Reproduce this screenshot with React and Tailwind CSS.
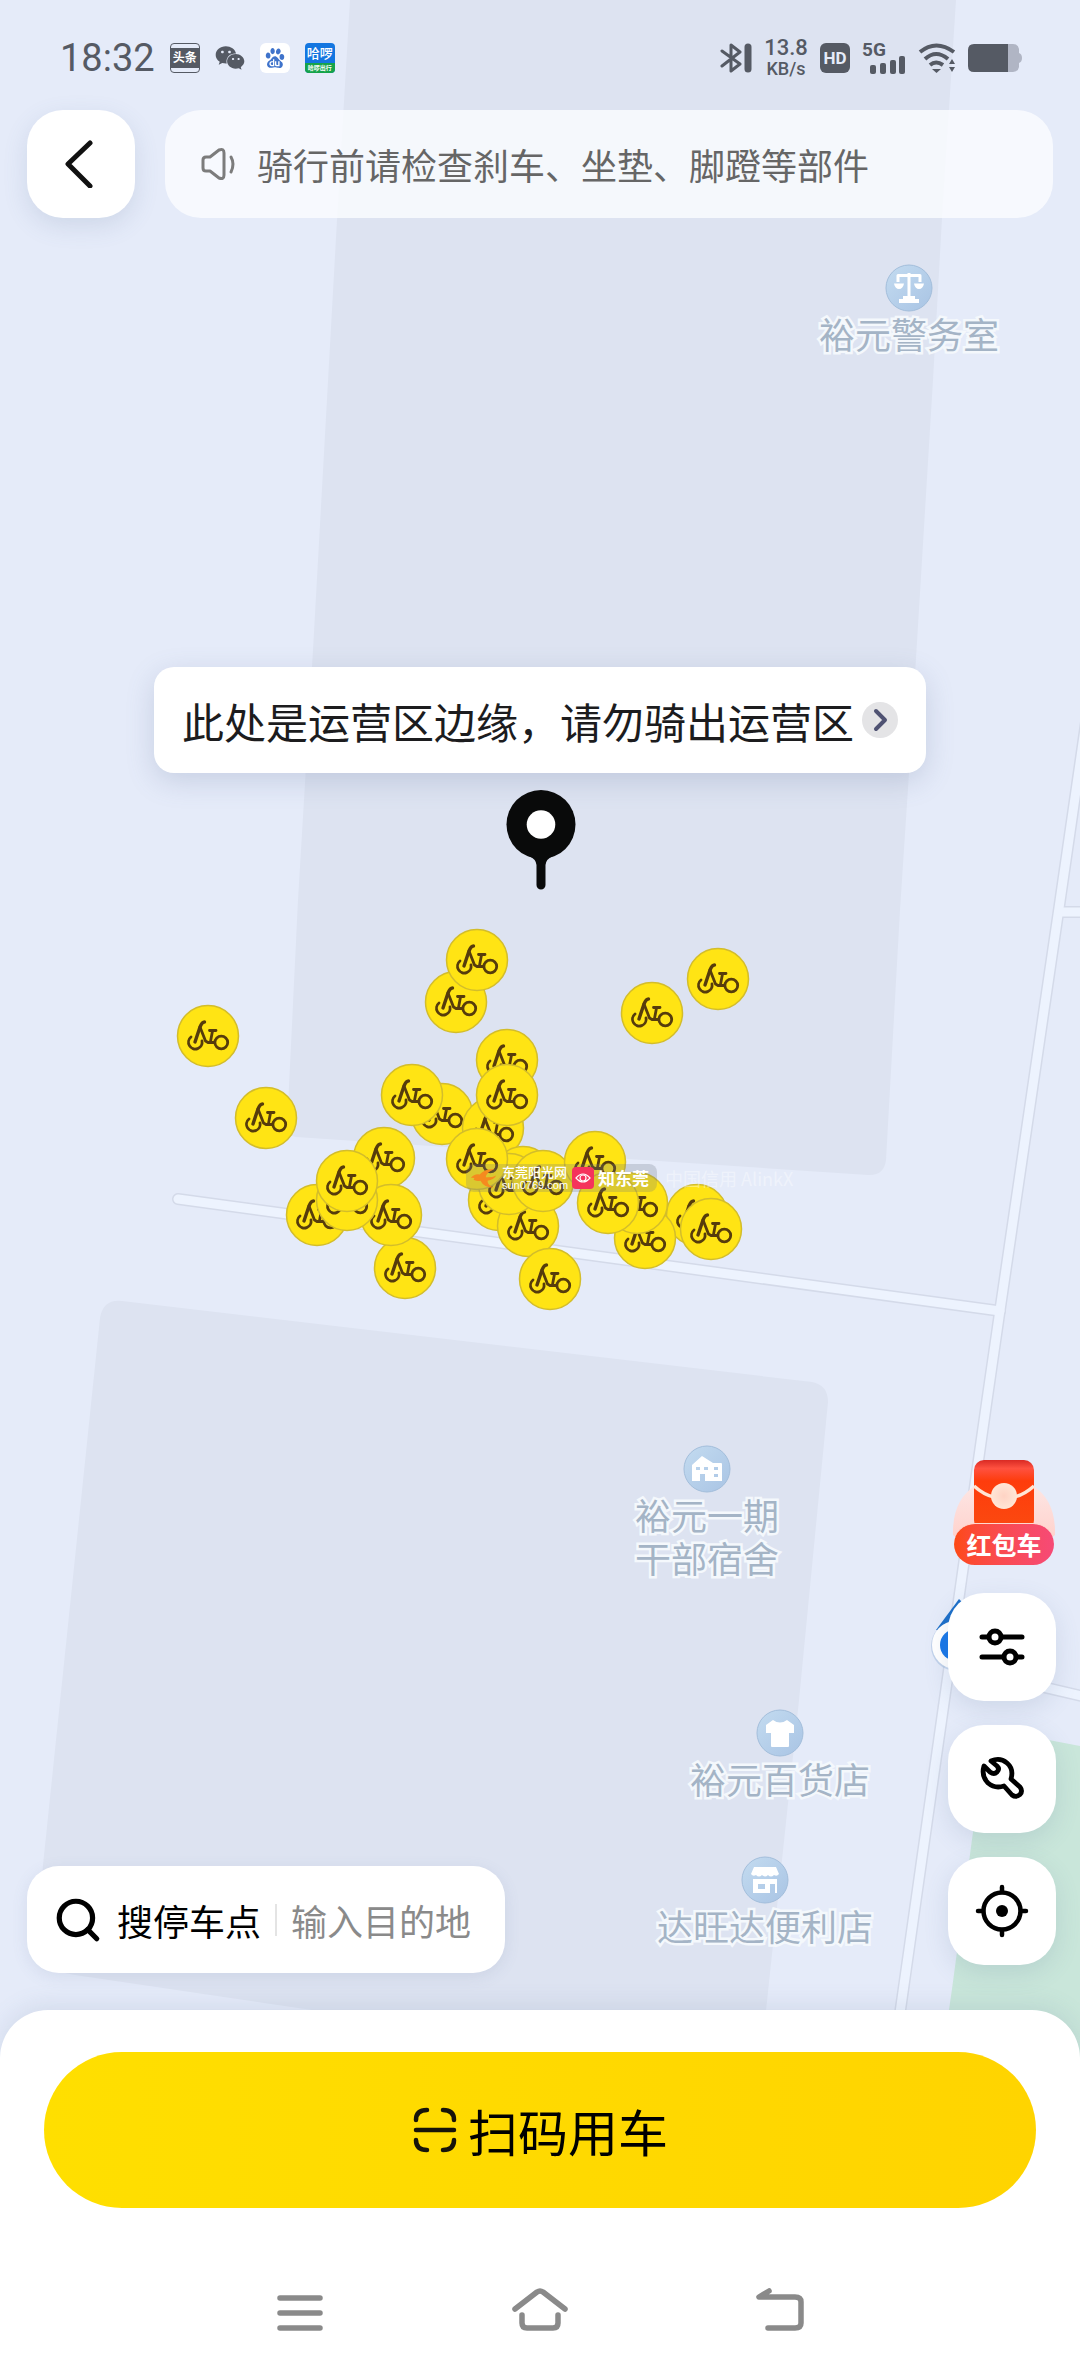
import { Search } from "lucide-react";
import { FaWeixin } from "react-icons/fa";
import { SiBaidu } from "react-icons/si";

// Bike positions on the map, back to front
const bikes = [
  [208, 1036],
  [266, 1118],
  [456, 1002],
  [477, 960],
  [652, 1013],
  [718, 979],
  [442, 1114],
  [412, 1095],
  [384, 1158],
  [317, 1215],
  [405, 1268],
  [391, 1215],
  [347, 1200],
  [347, 1181],
  [507, 1060],
  [493, 1128],
  [507, 1095],
  [523, 1177],
  [499, 1200],
  [528, 1226],
  [509, 1184],
  [477, 1159],
  [543, 1181],
  [550, 1279],
  [595, 1162],
  [697, 1215],
  [645, 1238],
  [637, 1203],
  [608, 1203],
  [711, 1229],
];

const roads = [
  "M178 1199L1000 1311",
  "M1059 912H1090",
  "M1000 1677L1090 1698",
  "M1087 715L1059 908L1000 1310L987 1400L899 2020",
];

const places = [
  { lines: ["裕元警务室"], x: 909, y: 264, icon: "scales" },
  { lines: ["裕元一期", "干部宿舍"], x: 707, y: 1445, icon: "house" },
  { lines: ["裕元百货店"], x: 780, y: 1709, icon: "shirt" },
  { lines: ["达旺达便利店"], x: 765, y: 1856, icon: "store" },
];

const PlaceIcon = ({ name }) => (
  <svg
    className="size-12"
    viewBox="0 0 48 48"
    fill="#fff"
    stroke="none"
    aria-hidden="true"
  >
    <defs>
      <linearGradient id={`place-${name}`} x1="0" y1="0" x2="1" y2="1">
        <stop offset="0" stopColor="#c3dbf0" />
        <stop offset="1" stopColor="#a9c4e4" />
      </linearGradient>
    </defs>
    <circle
      cx="24"
      cy="24"
      r="23"
      fill={`url(#place-${name})`}
      stroke="#a3bedb"
      strokeWidth="1"
    />
    {name === "scales" && (
      <>
        <path
          d="M13 18V11.500H35V18M24 9V34"
          fill="none"
          stroke="#fff"
          strokeWidth="3"
          strokeLinejoin="round"
        />
        <path d="M9 19.500H19C18.500 23 16.500 25 14 25S9.500 23 9 19.500ZM29 19.500H39C38.500 23 36.500 25 34 25S29.500 23 29 19.500ZM18 32H30V35H34V39H14V35H18Z" />
      </>
    )}
    {name === "house" && (
      <path
        fillRule="evenodd"
        d="M9 20L19 11L30 18H38Q39 18 39 19V36H22V29H17V36H9ZM13 22V25H17V22ZM21 22V25H25V22ZM31 22V25H35V22ZM31 29V32H35V29Z"
      />
    )}
    {name === "shirt" && (
      <path d="M17 11Q24 16 31 11L38 16V24H33V37Q33 38 32 38H16Q15 38 15 37V24H10V16Z" />
    )}
    {name === "store" && (
      <path
        fillRule="evenodd"
        d="M13 11H35L38 18Q36 21 33 19Q30 22 27 19Q24 22 21 19Q18 22 15 19Q12 21 10 18ZM12 23H36V37H34V28H29V37H12ZM17 28V33H24V28Z"
      />
    )}
  </svg>
);

const MapBackground = () => (
  <svg
    className="absolute inset-0 h-full w-full"
    viewBox="0 0 1080 2376"
    preserveAspectRatio="xMidYMin slice"
    aria-hidden="true"
  >
    <defs>
      <g id="bike">
        <circle r="30.500" fill="#ffe414" stroke="#d3bd2b" strokeWidth="1.500" />
        <g
          fill="none"
          stroke="#563c0c"
          strokeWidth="2.800"
          strokeLinecap="round"
          strokeLinejoin="round"
        >
          <path d="M-17 1A6.800 6.800 0 1 0 -6 5" />
          <path d="M-13 6L-8 -9Q-6 -14 -3.500 -14" strokeWidth="3.400" />
          <path d="M-8 -9L-2.500 5L0 6.500H6M2.500 5.500L4.500 -5M1.500 -5.500H8" />
          <circle cx="13.300" cy="6.500" r="6.400" />
        </g>
      </g>
    </defs>

    {/* Ground and buildings */}
    <rect width="1080" height="2376" fill="#e5ebf9" />
    <path
      d="M350 0L337 220L313 650L298 900L287 1128Q287 1136 296 1137L868 1175Q884 1176 886 1160L900 910L909 773L933 380L942 218L956 0Z"
      fill="#dde3f1"
    />
    <path
      d="M100 1318Q103 1299 122 1301L812 1382Q828 1385 828 1402L799 1700L765 2020H380L75 1975Q34 1969 36 1940L43 1865Z"
      fill="#dde3f1"
    />
    <path d="M985 1728L1080 1746V2100H936L952 1989L973 1832Z" fill="#c9e6da" />

    {/* Roads: border first, then the surface so that crossings stay open */}
    <g fill="none" stroke="#d4dae9" strokeWidth="12" strokeLinecap="round">
      {roads.map((d) => (
        <path key={d} d={d} />
      ))}
    </g>
    <g fill="none" stroke="#edf3fe" strokeWidth="9" strokeLinecap="round">
      {roads.map((d) => (
        <path key={d} d={d} />
      ))}
    </g>

    {/* Current location */}
    <path d="M936 1630L959 1599L990 1630Z" fill="#1c6fc9" />
    <circle cx="956" cy="1646" r="25" fill="#9db9de" opacity="0.5" />
    <circle cx="956" cy="1645" r="24" fill="#fff" />
    <circle cx="956" cy="1645" r="16" fill="#1877e8" />

    {bikes.map(([x, y]) => (
      <use key={`${x}-${y}`} href="#bike" x={x} y={y} />
    ))}
  </svg>
);

const Place = ({ place }) => (
  <div
    className="absolute flex -translate-x-1/2 flex-col items-center"
    style={{ left: place.x, top: place.y }}
  >
    <PlaceIcon name={place.icon} />
    <p className="text-center text-[36px] leading-[43px] whitespace-nowrap text-[#a4b4c6] [-webkit-text-stroke:5px_#f4f8fc] [paint-order:stroke]">
      {place.lines.map((line) => (
        <span key={line} className="block">
          {line}
        </span>
      ))}
    </p>
  </div>
);

const Credits = () => (
  <div className="absolute top-[1164px] left-[466px] flex h-7 items-center gap-2 text-white">
    <div className="flex h-7 items-center gap-1 rounded-lg bg-gray-500/25 px-1">
      <svg className="h-6 w-7" viewBox="0 0 32 24" aria-hidden="true">
        <path
          d="M1 12Q5 7 11 8Q17 1 28 2Q19 5 18 11Q24 12 30 9Q27 14 20 15Q20 20 27 23Q16 23 12 15Q7 16 4 14Q7 11 1 12Z"
          fill="#f58a1f"
        />
      </svg>
      <div className="font-medium">
        <p className="text-[13px] leading-[14px]">东莞阳光网</p>
        <p className="font-['Liberation_Sans',sans-serif] text-[11px] leading-[12px]">
          sun0769.com
        </p>
      </div>
      <svg className="size-[22px]" viewBox="0 0 22 22" aria-hidden="true">
        <rect width="22" height="22" rx="4" fill="#f5335c" />
        <g fill="none" stroke="#fff" strokeWidth="1.200">
          <path d="M4 11Q11 3 18 11Q11 19 4 11Z" />
          <circle cx="11" cy="11" r="3" />
        </g>
      </svg>
      <p className="pr-1 text-[17px] leading-6 font-bold">知东莞</p>
    </div>
    <p className="text-[18px] leading-6 text-white/40">中国信用 AlinkX</p>
  </div>
);

const StatusBar = () => (
  <div className="flex h-20 items-center justify-between pt-9 pr-[58px] pl-[60px] font-['Roboto','Noto_Sans_CJK_SC',sans-serif] text-[#555a64]">
    <div className="flex items-center gap-[15px]">
      <span className="text-[38px] leading-none">18:32</span>
      <span className="flex size-[30px] items-center justify-center rounded-sm border border-current">
        <span className="flex h-5 w-full items-center justify-center bg-[#555a64] text-[12px] leading-none font-bold text-white">
          头条
        </span>
      </span>
      <FaWeixin className="size-[30px]" />
      <span className="flex size-[30px] items-center justify-center rounded-md bg-white">
        <SiBaidu className="size-5 text-[#3f73cb]" />
      </span>
      <span className="flex size-[30px] flex-col overflow-hidden rounded-sm bg-[#1476e0] text-center text-white">
        <span className="h-5 text-[13px] leading-[22px] font-medium">哈啰</span>
        <span className="h-[10px] bg-[#16a34a] text-[6px] leading-[10px] font-bold">
          哈啰出行
        </span>
      </span>
    </div>

    <div className="flex items-center gap-3">
      {/* Bluetooth with device battery */}
      <svg
        className="h-8 w-8"
        viewBox="0 0 32 32"
        fill="none"
        stroke="currentColor"
        strokeWidth="3"
        strokeLinecap="round"
        strokeLinejoin="round"
        aria-hidden="true"
      >
        <path d="M2 9L20 22L11 29V3L20 10L2 24" />
        <path d="M28 5V27" strokeWidth="7" />
      </svg>
      <span className="flex w-11 flex-col items-center">
        <span className="text-[22px] leading-[21px] font-medium">13.8</span>
        <span className="text-[18px] leading-[21px] font-medium">KB/s</span>
      </span>
      <span className="flex size-[30px] items-center justify-center rounded-md bg-[#555a64] text-[17px] leading-none font-bold text-[#e5ebf9]">
        HD
      </span>
      <span className="relative block h-8 w-11">
        <span className="absolute top-0 left-0 text-[19px] leading-4 font-bold">
          5G
        </span>
        <svg
          className="absolute right-0 bottom-0 h-[18px] w-9"
          viewBox="0 0 36 18"
          fill="currentColor"
          aria-hidden="true"
        >
          <rect x="0" y="9" width="6" height="9" rx="2" />
          <rect x="10" y="7" width="6" height="11" rx="2" />
          <rect x="20" y="4" width="6" height="14" rx="2" />
          <rect x="29" y="0" width="6" height="18" rx="2" />
        </svg>
      </span>
      <svg
        className="h-8 w-[38px]"
        viewBox="0 0 38 32"
        fill="none"
        stroke="currentColor"
        strokeWidth="4"
        aria-hidden="true"
      >
        <path d="M2 10Q18 -3 36 10M7 17Q18 7 30 17M12 23Q18 18 25 23" />
        <path d="M14 27H23L18.500 31Z" fill="currentColor" stroke="none" />
        <path d="M31 22L34 17L37 22ZM31 25L34 30L37 25Z" fill="currentColor" stroke="none" />
      </svg>
      <svg className="h-7 w-[54px]" viewBox="0 0 54 28" aria-hidden="true">
        <path
          d="M38 0H45Q50 0 51 5V9Q54 10 54 14T51 19V23Q50 28 45 28H38Z"
          fill="#b0b5c4"
        />
        <path d="M6 0H40V28H6Q0 28 0 22V6Q0 0 6 0Z" fill="currentColor" />
      </svg>
    </div>
  </div>
);

const RedPacket = () => (
  <button
    type="button"
    className="relative mb-1 flex h-[105px] w-[104px] flex-col items-center justify-end"
  >
    <svg
      className="absolute inset-0 h-full w-full"
      viewBox="0 0 104 105"
      aria-hidden="true"
    >
      <defs>
        <linearGradient id="packet-halo" x1="0" y1="0" x2="0" y2="1">
          <stop offset="0" stopColor="#fde6e4" />
          <stop offset="1" stopColor="#ffcfc9" />
        </linearGradient>
        <linearGradient id="packet" x1="0" y1="0" x2="0" y2="1">
          <stop offset="0" stopColor="#d92a24" />
          <stop offset="0.120" stopColor="#ff5140" />
          <stop offset="0.300" stopColor="#fe3c0c" />
          <stop offset="1" stopColor="#fb4a10" />
        </linearGradient>
        <radialGradient id="seal">
          <stop offset="0" stopColor="#ffd3c4" />
          <stop offset="1" stopColor="#ffe6d6" />
        </radialGradient>
      </defs>
      <path
        d="M1 75Q0 40 24 25H80Q104 40 103 75Q90 86 52 86Q14 86 1 75Z"
        fill="url(#packet-halo)"
      />
      <rect x="22" y="0" width="60" height="70" rx="10" fill="url(#packet)" />
      <path
        d="M22 26Q32 35 42 37M62 37Q72 35 82 26"
        fill="none"
        stroke="#ffe6d6"
        strokeWidth="3.500"
      />
      <circle cx="52" cy="36" r="13" fill="url(#seal)" />
    </svg>
    <span className="relative flex h-[42px] w-[100px] items-center justify-center rounded-full border-t border-[#ffd9d0] bg-linear-to-r from-[#fd4912] to-[#f64a76] text-[25px] leading-none font-bold text-white">
      红包车
    </span>
  </button>
);

const RoundButton = ({ label, children }) => (
  <button
    type="button"
    aria-label={label}
    className="flex size-[108px] shrink-0 items-center justify-center rounded-[36px] bg-white text-black shadow-[0_8px_24px_rgba(90,110,150,0.16)]"
  >
    {children}
  </button>
);

const App = () => {
  return (
    <div className="relative flex min-h-screen flex-col overflow-hidden bg-[#e5ebf9] font-['Noto_Sans_CJK_SC',sans-serif]">
      <MapBackground />
      {places.map((place) => (
        <Place key={place.lines[0]} place={place} />
      ))}
      <Credits />

      {/* Operating area hint with the pickup pin below it */}
      <div className="absolute top-[667px] left-1/2 flex -translate-x-1/2 flex-col items-center gap-[17px]">
        <button
          type="button"
          className="flex h-[106px] items-center gap-2 rounded-[20px] bg-white pr-7 pl-7 text-[42px] whitespace-nowrap text-[#1c1c1e] shadow-[0_8px_28px_rgba(90,110,150,0.22)]"
        >
          此处是运营区边缘，请勿骑出运营区
          <svg className="size-9" viewBox="0 0 36 36" fill="none" aria-hidden="true">
            <circle cx="18" cy="18" r="18" fill="#e4e4e6" />
            <path
              d="M14 9L23 18L14 27"
              stroke="#4f5272"
              strokeWidth="4"
              strokeLinecap="round"
              strokeLinejoin="round"
            />
          </svg>
        </button>
        <svg className="h-[100px] w-[72px]" viewBox="0 0 72 100" aria-hidden="true">
          <circle cx="37" cy="34.500" r="34.500" fill="#090a0a" />
          <path
            d="M25 66Q32 69 32.500 75V95A4.500 4.500 0 0 0 41.500 95V75Q42 69 49 66Z"
            fill="#090a0a"
          />
          <circle cx="37" cy="34.500" r="14.300" fill="#fff" />
        </svg>
      </div>

      <header className="relative">
        <StatusBar />
        <div className="flex items-center gap-[30px] px-[27px] pt-[30px]">
          <RoundButton label="返回">
            <svg
              className="size-12"
              viewBox="0 0 48 48"
              fill="none"
              stroke="#111"
              strokeWidth="5"
              strokeLinecap="round"
              strokeLinejoin="round"
              aria-hidden="true"
            >
              <path d="M33 3L11 24L33 46" />
            </svg>
          </RoundButton>
          <div className="flex h-[108px] flex-1 items-center gap-5 rounded-[36px] bg-[#fbfdff]/80 pl-9 text-[#666]">
            <svg
              className="size-9"
              viewBox="0 0 36 36"
              fill="none"
              stroke="#7c7c7c"
              strokeWidth="3"
              strokeLinecap="round"
              strokeLinejoin="round"
              aria-hidden="true"
            >
              <path d="M5 11H9L18 4Q23 2 23 7V29Q23 34 18 32L9 25H5Q2 25 2 22V14Q2 11 5 11Z" />
              <path d="M30 11Q34 18 30 26" />
            </svg>
            <p className="text-[36px] leading-[44px]">
              骑行前请检查刹车、坐垫、脚蹬等部件
            </p>
          </div>
        </div>
      </header>

      {/* Search box and map tools */}
      <div className="relative mt-auto flex items-end justify-between pr-6 pb-[37px] pl-[27px]">
        <div className="flex h-[107px] items-center gap-[14px] rounded-[32px] bg-white pr-8 pl-[26px] text-[36px] shadow-[0_4px_16px_rgba(90,110,150,0.12)]">
          <Search className="size-[50px] text-black" strokeWidth={2.5} />
          <label htmlFor="destination" className="text-black">
            搜停车点
          </label>
          <span className="h-8 w-0.5 bg-[#e4e4e4]" />
          <input
            id="destination"
            type="text"
            placeholder="输入目的地"
            className="w-[182px] bg-transparent placeholder:text-[#8a8a8a] outline-none"
          />
        </div>

        <div className="mb-2 flex flex-col items-end gap-6">
          <RedPacket />
          <RoundButton label="筛选">
            <svg
              className="size-12"
              viewBox="0 0 48 48"
              fill="none"
              stroke="currentColor"
              strokeWidth="5"
              strokeLinecap="round"
              aria-hidden="true"
            >
              <path d="M4 14H10M24 14H44M4 34H25M39 34H44" />
              <circle cx="17" cy="14" r="6" />
              <circle cx="32" cy="34" r="6" />
            </svg>
          </RoundButton>
          <RoundButton label="报修">
            <svg
              className="size-12"
              viewBox="0 0 48 48"
              fill="none"
              stroke="currentColor"
              strokeWidth="4.800"
              strokeLinecap="round"
              strokeLinejoin="round"
              aria-hidden="true"
            >
              <path d="M13 6Q22 2 29 8Q36 14 33 24L42 32Q45 36 42 39.500Q38 43 34 40L26 31Q17 34 10 28Q3 21 6 11L12 17Q16 20 19 17Q22 14 19 11Z" />
            </svg>
          </RoundButton>
          <RoundButton label="定位">
            <svg
              className="size-[54px]"
              viewBox="0 0 54 54"
              fill="none"
              stroke="currentColor"
              strokeWidth="4.500"
              strokeLinecap="round"
              aria-hidden="true"
            >
              <circle cx="27" cy="27" r="18.500" />
              <circle cx="27" cy="27" r="6" fill="currentColor" stroke="none" />
              <path d="M27 3V8M27 46V51M3 27H8M46 27H51" />
            </svg>
          </RoundButton>
        </div>
      </div>

      {/* Bottom sheet */}
      <div className="relative rounded-t-[48px] bg-white px-11 pt-[42px] shadow-[0_-4px_24px_rgba(90,110,150,0.14)]">
        <button
          type="button"
          className="flex h-[156px] w-full items-center justify-center gap-2.5 rounded-full bg-linear-to-r from-[#ffdf00] to-[#ffd400] text-[50px] text-black"
        >
          <svg
            className="size-[46px]"
            viewBox="0 0 46 46"
            fill="none"
            stroke="#17140a"
            strokeWidth="4.500"
            strokeLinecap="round"
            aria-hidden="true"
          >
            <path d="M4 13Q4 3 15 3M31 3Q42 3 42 13M4 33Q4 43 15 43M31 43Q42 43 42 33M4 23H42" />
          </svg>
          扫码用车
        </button>

        <nav className="mt-9 flex h-[132px] items-center justify-center text-[#8a8a8a]">
          <button type="button" aria-label="最近任务" className="flex w-60 justify-center">
            <svg
              className="size-14"
              viewBox="0 0 56 56"
              fill="none"
              stroke="currentColor"
              strokeWidth="5.500"
              strokeLinecap="round"
            >
              <path d="M8 16H48M8 31H48M8 46H48" />
            </svg>
          </button>
          <button type="button" aria-label="主页" className="flex w-60 justify-center">
            <svg
              className="size-14"
              viewBox="0 0 56 56"
              fill="none"
              stroke="currentColor"
              strokeWidth="5.500"
              strokeLinecap="round"
              strokeLinejoin="round"
            >
              <path d="M3 27L25 10Q28 8 31 10L53 27" />
              <path d="M10 33V41Q10 46 15 46H41Q46 46 46 41V33" />
            </svg>
          </button>
          <button type="button" aria-label="返回上一页" className="flex w-60 justify-center">
            <svg
              className="size-14"
              viewBox="0 0 56 56"
              fill="none"
              stroke="currentColor"
              strokeWidth="5.500"
              strokeLinecap="round"
              strokeLinejoin="round"
            >
              <path d="M17 9L7 15H43Q49 15 49 20V41Q49 46 43 46H16" />
            </svg>
          </button>
        </nav>
      </div>
    </div>
  );
};

export default App;
